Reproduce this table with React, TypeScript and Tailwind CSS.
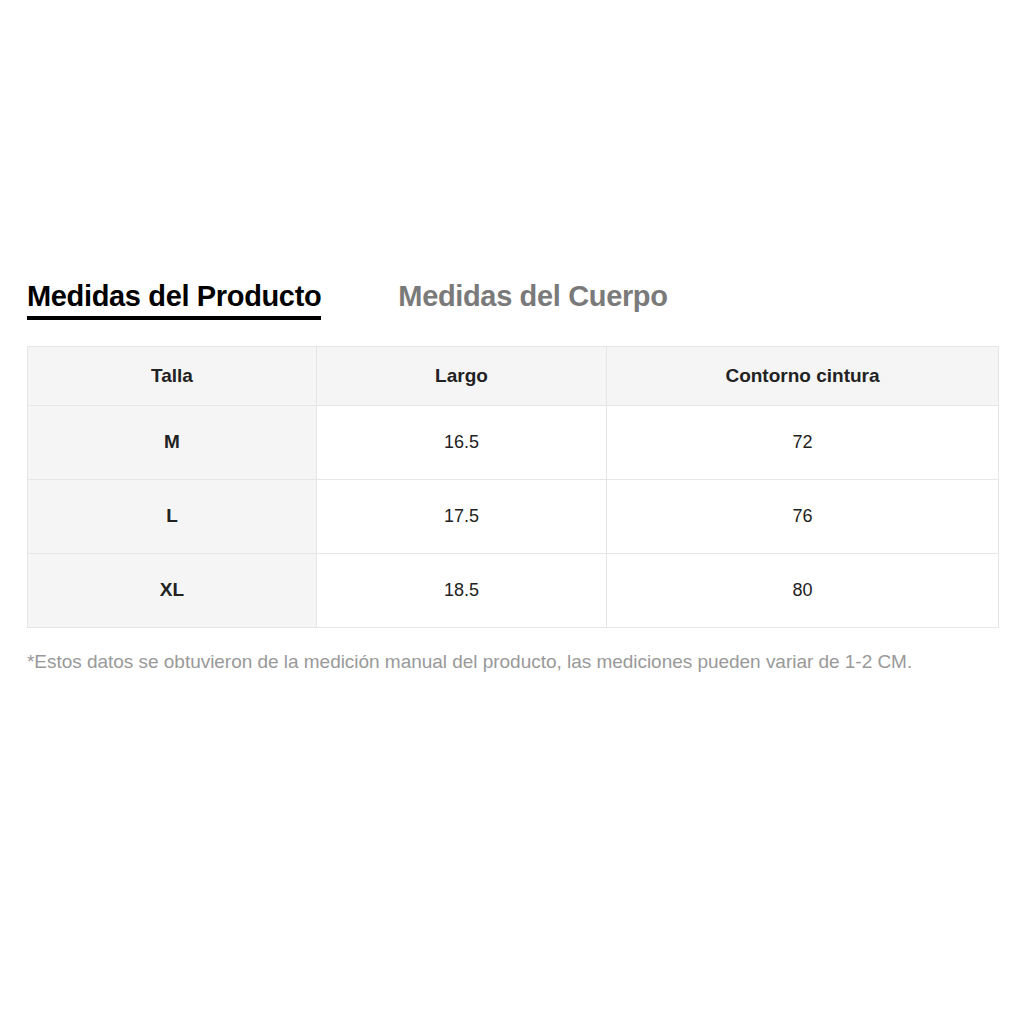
const rows = [
  { size: 'M', largo: '16.5', cintura: '72' },
  { size: 'L', largo: '17.5', cintura: '76' },
  { size: 'XL', largo: '18.5', cintura: '80' },
];

export default function App() {
  return (
    <div
      className="min-h-screen w-full bg-white px-[27px] pt-[278px] text-[#222]"
      style={{ fontFamily: '"Liberation Sans", Arial, sans-serif' }}>
      <div className="flex items-start gap-[77px]">
        <div className="flex flex-col">
          <span className="text-[29px] font-bold leading-[36px] tracking-[-0.35px] text-black">
            Medidas del Producto
          </span>
          <span className="mt-[2px] h-[4px] w-full bg-black" />
        </div>
        <span className="text-[29px] font-bold leading-[36px] tracking-[-0.35px] text-[#7a7a7a]">
          Medidas del Cuerpo
        </span>
      </div>

      <table className="mt-[26px] w-[972px] table-fixed border-collapse text-center text-[18px]">
        <colgroup>
          <col className="w-[289px]" />
          <col className="w-[290px]" />
          <col />
        </colgroup>
        <thead>
          <tr className="h-[59px] bg-[#f5f5f5] text-[19px]">
            <th className="border border-[#e6e6e6] font-bold">Talla</th>
            <th className="border border-[#e6e6e6] font-bold">Largo</th>
            <th className="border border-[#e6e6e6] font-bold">Contorno cintura</th>
          </tr>
        </thead>
        <tbody>
          {rows.map((r) => (
            <tr key={r.size} className="h-[74px]">
              <td className="border border-[#e6e6e6] bg-[#f5f5f5] text-[19px] font-bold">{r.size}</td>
              <td className="border border-[#e6e6e6]">{r.largo}</td>
              <td className="border border-[#e6e6e6]">{r.cintura}</td>
            </tr>
          ))}
        </tbody>
      </table>

      <p className="mt-[21px] text-[19px] leading-[26px] tracking-[-0.03px] text-[#999]">
        *Estos datos se obtuvieron de la medición manual del producto, las mediciones pueden variar de 1-2 CM.
      </p>
    </div>
  );
}
